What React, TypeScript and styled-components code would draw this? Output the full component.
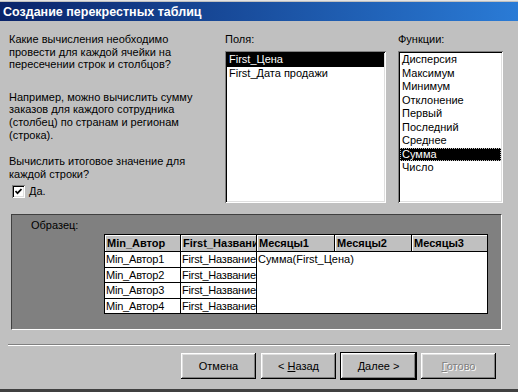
import styled, { createGlobalStyle } from "styled-components"

const GlobalStyle = createGlobalStyle`
  html, body {
    margin: 0;
    padding: 0;
    background: #c0c0c0;
  }
  body {
    font-family: "Liberation Sans", Arial, sans-serif;
    font-size: 11px;
    color: #000;
  }
`

const Window = styled.div`
  width: 518px;
  height: 392px;
  box-sizing: border-box;
  display: flex;
  flex-direction: column;
  overflow: hidden;
  background: #c0c0c0;
  border-top: 1px solid #e4e4e4;
  padding-top: 1px;
  border-bottom: 3px solid #404040;
`

const TitleBar = styled.div`
  height: 19px;
  flex: none;
  display: flex;
  align-items: center;
  padding-left: 3px;
  background: linear-gradient(to right, #0a246a, #2a7bd6);
  color: #fff;
  font-weight: bold;
  font-size: 12.5px;
  white-space: nowrap;
`

const Content = styled.div`
  flex: 1;
  display: flex;
  flex-direction: column;
  padding: 12px 16px 0 9px;
`

const TopArea = styled.div`
  display: flex;
  align-items: flex-start;
`

const Intro = styled.div`
  width: 216px;
  flex: none;
  line-height: 12.6px;
`

const Para = styled.p<{ $gap: number }>`
  margin: ${p => p.$gap}px 0 0;
`

const CheckRow = styled.label`
  display: flex;
  align-items: center;
  gap: 4px;
  margin-top: 5px;
  padding-left: 3px;
  line-height: 13px;
`

const CheckBox = styled.span`
  width: 13px;
  height: 13px;
  box-sizing: border-box;
  display: flex;
  align-items: center;
  justify-content: center;
  background: #fff;
  box-shadow: inset 1px 1px #808080, inset -1px -1px #fff, inset 2px 2px #000, inset -2px -2px #dfdfdf;
`

const ListColumn = styled.div<{ $width: number; $offset: number }>`
  width: ${p => p.$width}px;
  margin-left: ${p => p.$offset}px;
  flex: none;
`

const Label = styled.div`
  height: 13px;
  line-height: 13px;
  margin-bottom: 5px;
`

const ListBox = styled.div`
  height: 152px;
  box-sizing: border-box;
  padding: 2px;
  background: #fff;
  box-shadow: inset 1px 1px #808080, inset -1px -1px #fff, inset 2px 2px #000, inset -2px -2px #dfdfdf;
`

const Item = styled.div<{ $selected?: boolean; $focused?: boolean }>`
  height: 13.5px;
  line-height: 13.5px;
  padding-left: 2px;
  white-space: nowrap;
  background: ${p => (p.$selected ? "#000" : "transparent")};
  color: ${p => (p.$selected ? "#fff" : "#000")};
  outline: ${p => (p.$focused ? "1px dotted #c0c0c0" : "none")};
  outline-offset: -1px;
`

const SamplePanel = styled.div`
  width: 491px;
  height: 116px;
  box-sizing: border-box;
  margin: 11px 0 0 2px;
  background: #808080;
  border: 1px solid;
  border-color: #404040 #fff #fff #404040;
`

const Caption = styled.div`
  margin: 4px 0 0 19px;
  line-height: 13px;
`

const SampleGrid = styled.div`
  margin: 2px 0 0 92px;
  width: 383px;
  display: grid;
  grid-template-columns: 76px 76px 78px 77px 76px;
  grid-template-rows: 17px repeat(4, 15.5px);
  border-left: 1px solid #000;
  border-top: 1px solid #000;
`

const HeadCell = styled.div`
  box-sizing: border-box;
  padding-left: 2px;
  line-height: 16px;
  font-weight: bold;
  white-space: nowrap;
  overflow: hidden;
  background: #c0c0c0;
  border-right: 1px solid #000;
  border-bottom: 1px solid #000;
  box-shadow: inset 1px 1px #fff;
`

const BodyCell = styled.div`
  box-sizing: border-box;
  padding-left: 1px;
  line-height: 15px;
  letter-spacing: -0.2px;
  white-space: nowrap;
  overflow: hidden;
  background: #fff;
  border-right: 1px solid #000;
  border-bottom: 1px solid #000;
`

const DataArea = styled.div`
  grid-column: 3 / 6;
  grid-row: 2 / 6;
  box-sizing: border-box;
  padding-left: 1px;
  line-height: 15px;
  background: #fff;
  border-right: 1px solid #000;
  border-bottom: 1px solid #000;
`

const Separator = styled.div`
  width: 502px;
  margin: 14px 0 0 -1px;
  border-top: 1px solid #808080;
  border-bottom: 1px solid #fff;
`

const ButtonRow = styled.div`
  display: flex;
  gap: 5px;
  margin-top: 7px;
  padding-left: 172px;
`

const Button = styled.button<{ $default?: boolean }>`
  width: 75px;
  height: 26px;
  padding: 0;
  border: none;
  background: #c0c0c0;
  font-family: inherit;
  font-size: 11px;
  color: #000;
  box-shadow: inset -1px -1px #000, inset 1px 1px #fff, inset -2px -2px #808080, inset 2px 2px #dfdfdf;
  outline: ${p => (p.$default ? "1px solid #000" : "none")};

  &:disabled {
    color: #808080;
    text-shadow: 1px 1px #fff;
  }
`

const fields = ["First_Цена", "First_Дата продажи"]
const functions = ["Дисперсия", "Максимум", "Минимум", "Отклонение", "Первый", "Последний", "Среднее", "Сумма", "Число"]
const authors = ["Min_Автор1", "Min_Автор2", "Min_Автор3", "Min_Автор4"]
const headers = ["Min_Автор", "First_Название", "Месяцы1", "Месяцы2", "Месяцы3"]

export default function App() {
  return (
    <>
      <GlobalStyle />
      <Window>
        <TitleBar>Создание перекрестных таблиц</TitleBar>
        <Content>
          <TopArea>
            <Intro>
              <Para $gap={0}>
                Какие вычисления необходимо<br />провести для каждой ячейки на<br />пересечении строк и столбцов?
              </Para>
              <Para $gap={20}>
                Например, можно вычислить сумму<br />заказов для каждого сотрудника<br />(столбец) по странам и регионам<br />(строка).
              </Para>
              <Para $gap={14}>
                Вычислить итоговое значение для<br />каждой строки?
              </Para>
              <CheckRow>
                <CheckBox>
                  <svg width="7" height="7" viewBox="0 0 7 7">
                    <polyline points="0.5,3 2.5,5.2 6.5,1" fill="none" stroke="#000" strokeWidth="1.7" />
                  </svg>
                </CheckBox>
                Да.
              </CheckRow>
            </Intro>
            <ListColumn $width={161} $offset={0}>
              <Label>Поля:</Label>
              <ListBox>
                {fields.map((f, i) => (
                  <Item key={f} $selected={i === 0}>{f}</Item>
                ))}
              </ListBox>
            </ListColumn>
            <ListColumn $width={105} $offset={12}>
              <Label>Функции:</Label>
              <ListBox>
                {functions.map(f => (
                  <Item key={f} $selected={f === "Сумма"} $focused={f === "Сумма"}>{f}</Item>
                ))}
              </ListBox>
            </ListColumn>
          </TopArea>

          <SamplePanel>
            <Caption>Образец:</Caption>
            <SampleGrid>
              {headers.map(h => (
                <HeadCell key={h}>{h}</HeadCell>
              ))}
              {authors.map((a, i) => [
                <BodyCell key={a} style={{ gridRow: i + 2, gridColumn: 1 }}>{a}</BodyCell>,
                <BodyCell key={a + "n"} style={{ gridRow: i + 2, gridColumn: 2 }}>First_Название</BodyCell>,
              ])}
              <DataArea>Сумма(First_Цена)</DataArea>
            </SampleGrid>
          </SamplePanel>

          <Separator />

          <ButtonRow>
            <Button>Отмена</Button>
            <Button>&lt; <u>Н</u>азад</Button>
            <Button $default><u>Д</u>алее &gt;</Button>
            <Button disabled><u>Г</u>отово</Button>
          </ButtonRow>
        </Content>
      </Window>
    </>
  )
}
